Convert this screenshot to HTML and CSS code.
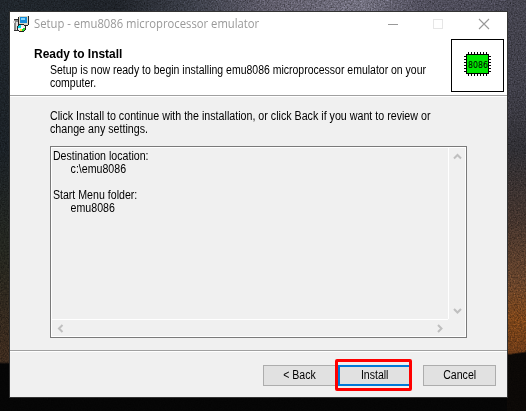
FILE: index.html
```html
<!DOCTYPE html>
<html lang="en">
<head>
<meta charset="utf-8">
<title>Setup - emu8086 microprocessor emulator</title>
<link rel="stylesheet" href="styles.css">
</head>
<body>
<svg class="grain" width="526" height="411" aria-hidden="true">
  <filter id="grain" x="0" y="0" width="100%" height="100%" color-interpolation-filters="sRGB"><feTurbulence type="fractalNoise" baseFrequency="0.7" numOctaves="2" seed="4"/><feColorMatrix values="0.5 0.4 0 0 0.05  0.5 0.4 0 0 0.05  0.5 0.4 0 0 0.05  0 0 0 0 1"/></filter>
  <rect width="526" height="411" filter="url(#grain)"/>
</svg>
<main class="window">
  <header class="titlebar">
    <svg class="app-icon" width="16" height="16" viewBox="0 0 16 16" shape-rendering="crispEdges">
      <path fill="#888" d="M1 4h5v11H1z"/><path fill="#ddd" d="M0 5h2v2H0zM3 6h2v9H3z"/><path fill="#333" d="M1 3h5v1H1zM1 14h4v1H1z"/>
      <path fill="#d5d5c8" d="M6 0h9v9H6z"/><path fill="#222" d="M15 0h1v9h-1v1h-4V9h4zM5 1h1v8H5z"/>
      <path fill="#168bd8" d="M7 1h7v6H7z"/><path fill="#7ed4ff" d="M8 2h4v2H8z"/>
      <path fill="#222" d="M6 8h5v1h1v1h1v4h-1v1h-1v1H6v-1H5v-1H4v-4h1V9h1z"/>
      <path fill="#eee" d="M6 9h5v1h1v4h-1v1H6v-1H5v-4h1z"/><path fill="#00d9e9" d="M5 10h1V9h2v3H5z"/><path fill="#24da35" d="M9 12h3v2h-1v1H9z"/><path fill="#ffe13c" d="M7 13h2v2H7z"/><path fill="#fff" d="M8 11h2v2H8z"/>
    </svg>
    <span class="caption"><span>Setup - emu8086 microprocessor emulator</span></span>
    <svg class="controls" width="103" height="12" viewBox="0 0 103 12" fill="none">
      <path d="M0 6.500h10" stroke="#999"/><rect x="45.500" y="1.500" width="9" height="9" stroke="#e6e6e6"/><path d="M91 1l10 10M101 1L91 11" stroke="#999" stroke-width="1.100"/>
    </svg>
  </header>
  <section class="intro">
    <div class="intro-text">
      <h1>Ready to Install</h1>
      <p>Setup is now ready to begin installing emu8086 microprocessor emulator on your<br>computer.</p>
    </div>
    <svg class="chip" width="53" height="53" viewBox="0 0 53 53" shape-rendering="crispEdges">
      <rect x=".5" y=".5" width="52" height="52" fill="#fff" stroke="#000"/>
      <path stroke="#000" stroke-dasharray="1 2" d="M17 14h20M17 36h20" stroke-width="2"/>
      <path stroke="#000" stroke-dasharray="1 2" d="M14 17v17M39 17v17" stroke-width="2"/>
      <rect x="15.500" y="15.500" width="22" height="19" fill="#00e600" stroke="#000"/>
      <text x="17" y="29" textLength="20" lengthAdjust="spacingAndGlyphs">8086</text>
    </svg>
  </section>
  <section class="content">
    <p class="prompt">Click Install to continue with the installation, or click Back if you want to review or<br>change any settings.</p>
    <div class="memo">
      <div class="memo-text">Destination location:<br><span class="value">c:\emu8086</span><br><br>Start Menu folder:<br><span class="value">emu8086</span></div>
      <div class="vbar">
        <svg width="9" height="8" viewBox="0 0 9 8"><path d="M1 5.500L4.500 2L8 5.500"/></svg>
        <svg width="9" height="8" viewBox="0 0 9 8"><path d="M1 2L4.500 5.500L8 2"/></svg>
      </div>
      <div class="hbar">
        <svg width="8" height="9" viewBox="0 0 8 9"><path d="M5.500 1L2 4.500L5.500 8"/></svg>
        <svg width="8" height="9" viewBox="0 0 8 9"><path d="M2 1L5.500 4.500L2 8"/></svg>
      </div>
      <div></div>
    </div>
  </section>
  <footer class="actions">
    <button class="back"><span>&lt; Back</span></button>
    <button class="install"><span>Install</span></button>
    <button class="cancel"><span>Cancel</span></button>
  </footer>
</main>
</body>
</html>
```
FILE: styles.css
```css
* { box-sizing: border-box; }
html { background: #111; }
body {
  margin: 0;
  width: 526px;
  height: 411px;
  overflow: hidden;
  padding: 12px 0 0 10px;
  position: relative;
  isolation: isolate;
  font: 12px/13px "Liberation Sans", sans-serif;
  color: #000;
  background:
    linear-gradient(#0000 0 362px, #050505 364px) 0 0 / 10px 100% no-repeat,
    linear-gradient(172deg, #0000 0 56px, #0b0806 58px) 100% 297px / 19px 114px no-repeat,
    linear-gradient(#0000 397px, #050505 397px),
    linear-gradient(#45444f, #3f3e48 90px, #302f34 150px, #44342d 220px, #66432b 280px, #7c4519 320px, #6b3a17 355px) 100% 0 / 19px 100% no-repeat,
    linear-gradient(#20262c, #1b2126 150px, #24261f 250px, #3b2a1d 350px) 0 0 / 10px 100% no-repeat,
    linear-gradient(90deg, #20262c, #1f2329 22%, #3b3e48 36%, #605d6b 52%, #72707f 69%, #514f5d 80%, #474652);
}
.grain { position: absolute; inset: 0; z-index: -1; mix-blend-mode: overlay; opacity: .8; }
.window {
  width: 497px;
  height: 385px;
  background: #f0f0f0;
  outline: 1px solid #333;
  display: flex;
  flex-direction: column;
}
.titlebar { height: 24px; flex: none; background: #fff; display: flex; align-items: center; padding: 0 16px 0 3px; }
.caption { margin-left: 5px; flex: 1; font: 12px/16px "Open Sans", sans-serif; color: #999; white-space: nowrap; }
.caption span { display: inline-block; transform: scaleX(.938); transform-origin: 0 0; }
.intro { height: 60px; flex: none; background: #fff; border-bottom: 1px solid #a0a0a0; display: flex; justify-content: space-between; padding: 3px 3px 0 24px; }
.intro-text { padding-top: 8px; width: 400px; }
h1 { margin: 0 0 4px; font-size: 13px; line-height: 13px; font-weight: bold; white-space: nowrap; transform: scaleX(.92); transform-origin: 0 0; }
p { margin: 0; white-space: nowrap; transform: scaleX(.89); transform-origin: 0 0; }
.intro-text p { margin-left: 16px; transform: scaleX(.874); }
.chip { flex: none; }
.chip text { font: 9px "DejaVu Sans", sans-serif; fill: #000; }
.content { height: 254px; border-top: 1px solid #fff; padding: 13px 40px 0; }
.memo { margin-top: 10px; width: 417px; height: 192px; border: 1px solid #7a7a7a; box-shadow: inset 0 0 0 1px #fff; padding: 1px; display: grid; grid-template: 171px 17px / 396px 17px; }
.memo-text { padding: 2px 1px; transform: scaleX(.885); transform-origin: 0 0; }
.value { padding-left: 20px; }
.vbar { border-left: 1px solid #fff; display: flex; flex-direction: column; align-items: center; justify-content: space-between; padding: 5px 0 4px; }
.hbar { border-top: 1px solid #fff; display: flex; align-items: center; justify-content: space-between; padding: 0 4px 0 5px; }
.memo path { fill: none; stroke: #bfbfbf; stroke-width: 2; }
.actions { flex: 1; border-top: 1px solid #a0a0a0; box-shadow: inset 0 1px #fff; display: flex; padding: 14px 11px 0 253px; }
button { width: 73px; height: 21px; padding: 0; font: 12px/13px "Liberation Sans", sans-serif; color: #000; background: #e1e1e1; border: 1px solid #adadad; }
button span { display: inline-block; transform: scaleX(.88); }
.install { position: relative; margin-left: 2px; border: 2px solid #0078d7; }
.install::after { content: ""; position: absolute; inset: -8px -3px -7px -5px; border: 3px solid #f00; border-radius: 2px; }
.cancel { margin-left: auto; }
```
